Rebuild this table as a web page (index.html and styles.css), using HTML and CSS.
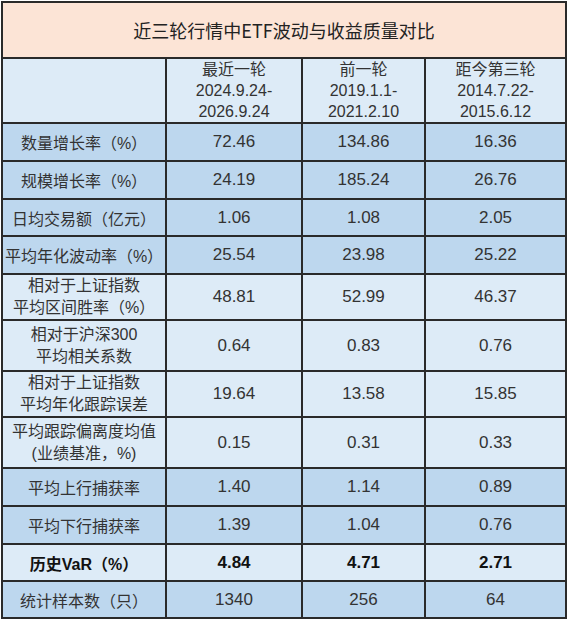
FILE: index.html
```html
<!DOCTYPE html>
<html lang="zh-CN">
<head>
    <meta charset="UTF-8">
    <meta name="viewport" content="width=device-width, initial-scale=1.0">
    <title>近三轮行情中ETF波动与收益质量对比</title>
    <link rel="stylesheet" href="styles.css">
</head>
<body>
    <!-- 对比表 -->
    <table class="cmp">
        <colgroup>
            <col class="c-name">
            <col class="c-a">
            <col class="c-b">
            <col class="c-c">
        </colgroup>
        <tr class="title-row">
            <th colspan="4">近三轮行情中ETF波动与收益质量对比</th>
        </tr>
        <tr class="head-row">
            <td></td>
            <td>最近一轮<br>2024.9.24-<br>2026.9.24</td>
            <td>前一轮<br>2019.1.1-<br>2021.2.10</td>
            <td>距今第三轮<br>2014.7.22-<br>2015.6.12</td>
        </tr>
        <tr class="dark">
            <td>数量增长率（%）</td><td>72.46</td><td>134.86</td><td>16.36</td>
        </tr>
        <tr class="dark">
            <td>规模增长率（%）</td><td>24.19</td><td>185.24</td><td>26.76</td>
        </tr>
        <tr class="dark short">
            <td>日均交易额（亿元）</td><td>1.06</td><td>1.08</td><td>2.05</td>
        </tr>
        <tr class="dark">
            <td>平均年化波动率（%）</td><td>25.54</td><td>23.98</td><td>25.22</td>
        </tr>
        <tr class="light two">
            <td>相对于上证指数<br>平均区间胜率（%）</td><td>48.81</td><td>52.99</td><td>46.37</td>
        </tr>
        <tr class="light two tall">
            <td>相对于沪深300<br>平均相关系数</td><td>0.64</td><td>0.83</td><td>0.76</td>
        </tr>
        <tr class="light two">
            <td>相对于上证指数<br>平均年化跟踪误差</td><td>19.64</td><td>13.58</td><td>15.85</td>
        </tr>
        <tr class="light two tall">
            <td>平均跟踪偏离度均值<br>(业绩基准，%)</td><td>0.15</td><td>0.31</td><td>0.33</td>
        </tr>
        <tr class="dark">
            <td>平均上行捕获率</td><td>1.40</td><td>1.14</td><td>0.89</td>
        </tr>
        <tr class="dark">
            <td>平均下行捕获率</td><td>1.39</td><td>1.04</td><td>0.76</td>
        </tr>
        <tr class="light bold short">
            <td>历史VaR（%）</td><td>4.84</td><td>4.71</td><td>2.71</td>
        </tr>
        <tr class="dark short">
            <td>统计样本数（只）</td><td>1340</td><td>256</td><td>64</td>
        </tr>
    </table>
</body>
</html>
```

FILE: styles.css
```css
/* 基础 */
body {
    margin: 0;
    padding: 1px;
    background: #FFFFFF;
    font-family: 'Liberation Sans', 'Noto Sans CJK SC', sans-serif;
    color: #333333;
}

/* 表格 */
.cmp {
    border-collapse: collapse;
    width: 566px;
    table-layout: fixed;
    border: 2px solid #1E1E1E;
}

.c-name { width: 164px; }
.c-a { width: 136px; }
.c-b { width: 123px; }
.c-c { width: 141px; }

.cmp td,
.cmp th {
    border: 2px solid #2A2A2A;
    text-align: center;
    padding: 0;
    font-size: 16px;
    font-weight: normal;
}

/* 数值列 */
.dark td + td,
.light td + td {
    font-size: 17px;
}

/* 标题行 */
.title-row th {
    height: 54px;
    background: #FCE4D6;
    font-size: 18px;
    color: #222222;
    font-family: 'Noto Sans CJK SC', sans-serif;
}

/* 表头 */
.head-row td {
    height: 61px;
    background: #DDEBF7;
    line-height: 21px;
}

/* 数据行 */
.dark td {
    height: 36px;
    background: #BDD7EE;
}

.light td {
    height: 36px;
    background: #DDEBF7;
}

.short td {
    height: 35px;
}

.two td {
    height: 44px;
    line-height: 22px;
}

.two.tall td {
    height: 49px;
}

.bold td {
    font-weight: bold;
    color: #111111;
}
```
